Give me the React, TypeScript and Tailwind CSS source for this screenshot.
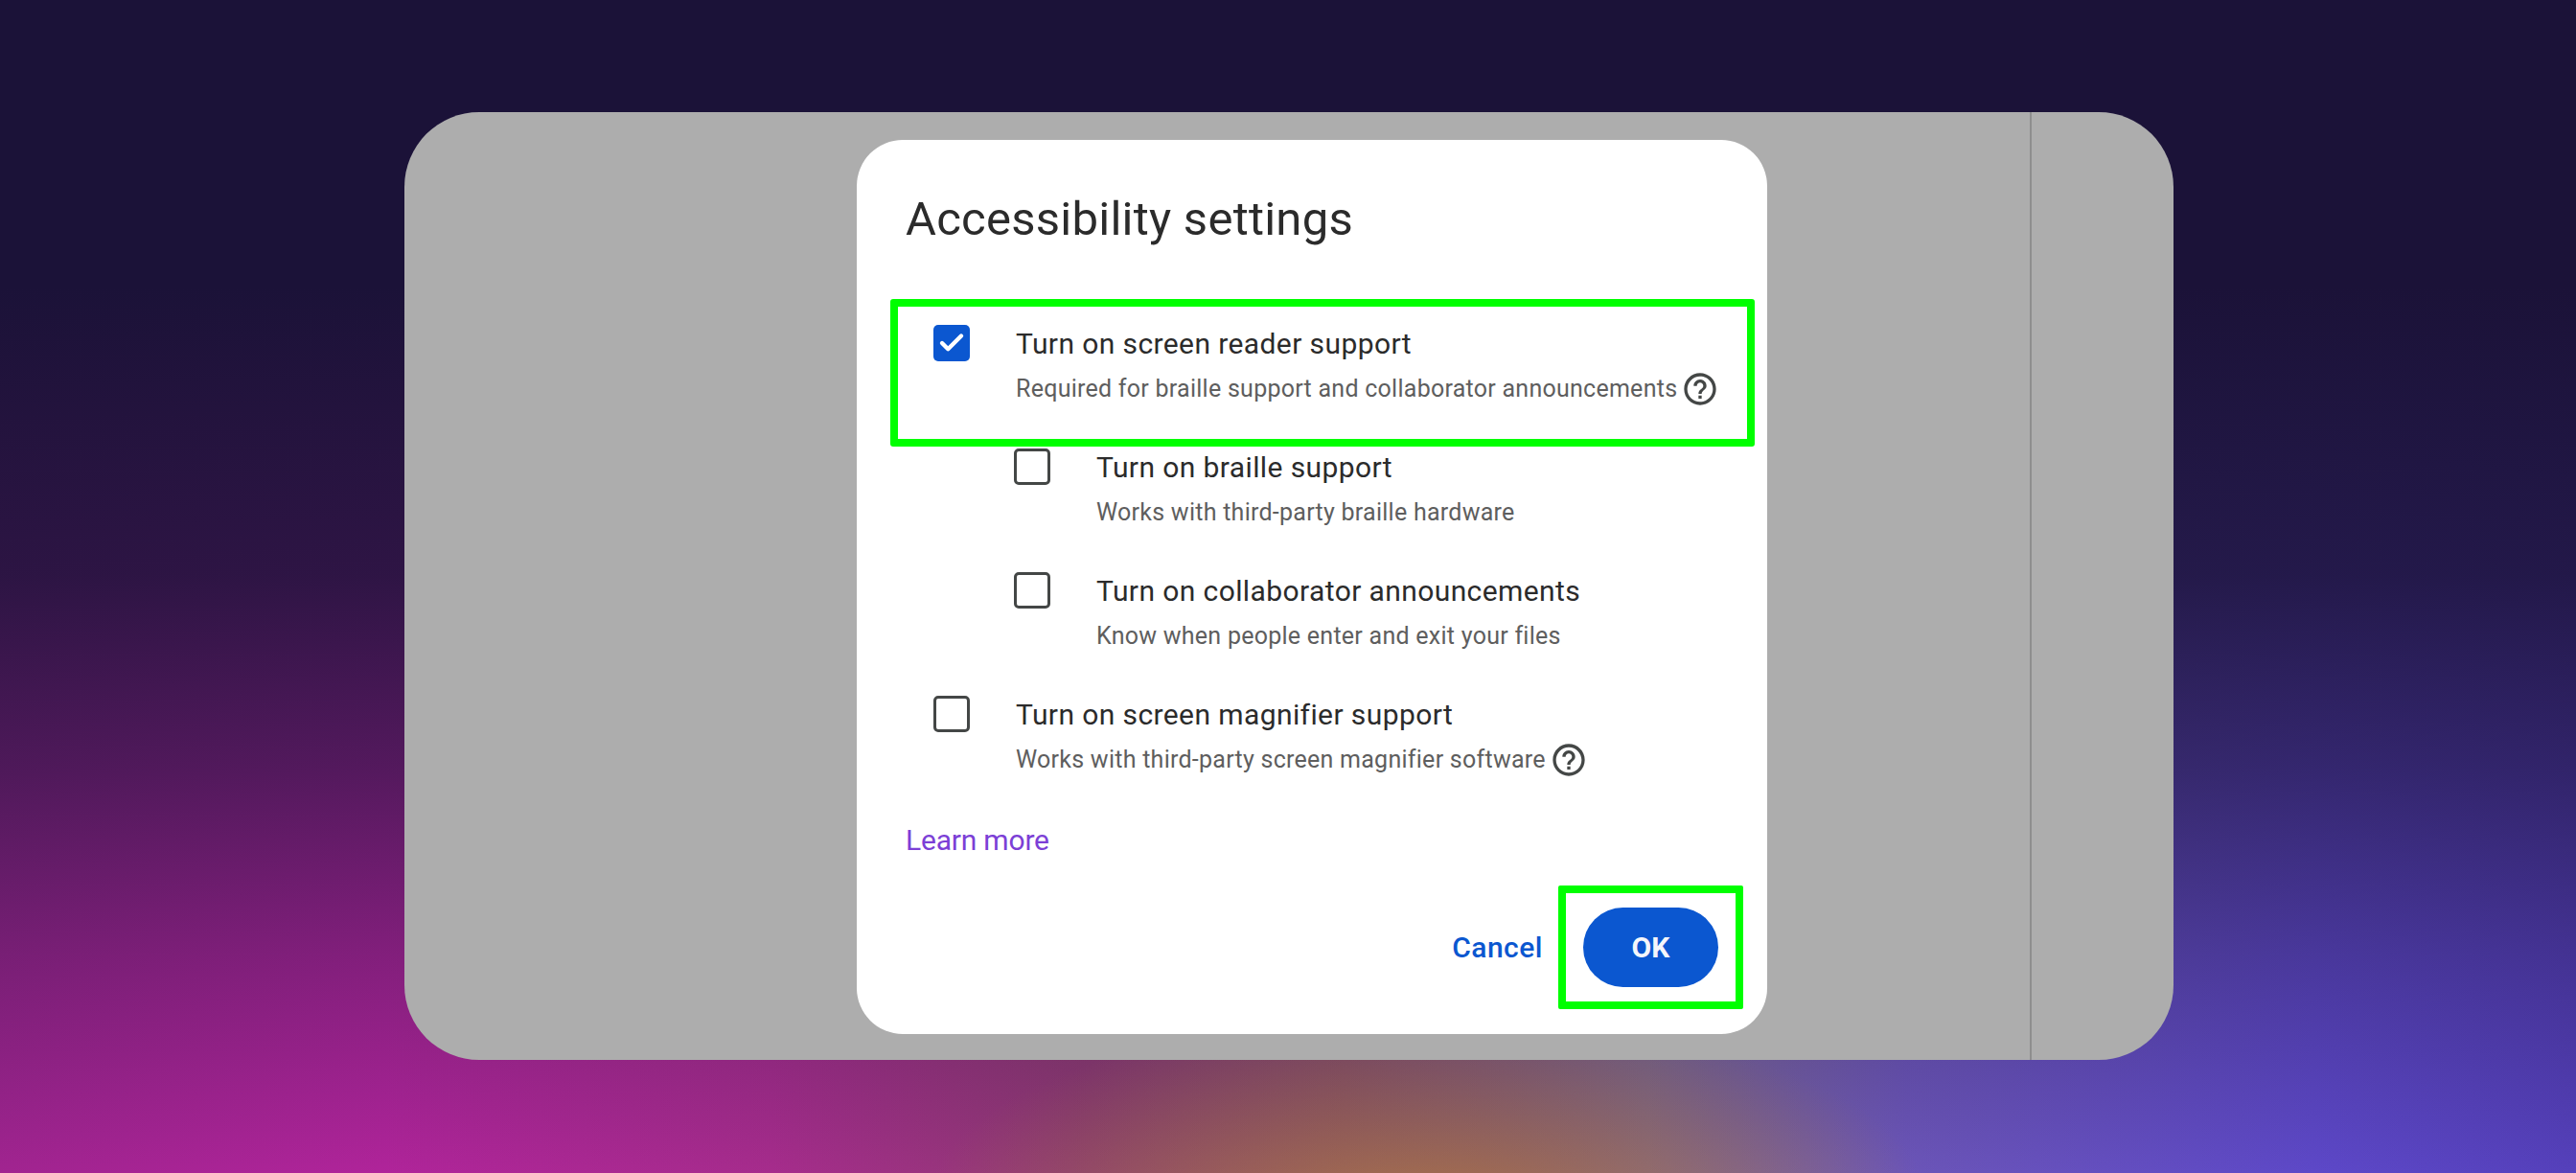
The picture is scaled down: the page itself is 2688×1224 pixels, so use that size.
import { Check } from 'lucide-react';

const font = "font-['Roboto',sans-serif]";

function HelpIcon() {
  return (
    <svg viewBox="0 0 24 24" className="ml-[4px] h-[40px] w-[40px] shrink-0 fill-[#444746]">
      <path d="M11 18h2v-2h-2v2zm1-16C6.48 2 2 6.48 2 12s4.48 10 10 10 10-4.48 10-10S17.52 2 12 2zm0 18c-4.41 0-8-3.59-8-8s3.59-8 8-8 8 3.59 8 8-3.59 8-8 8zm0-14c-2.21 0-4 1.79-4 4h2c0-1.1.9-2 2-2s2 .9 2 2c0 2-3 1.75-3 5h2c0-2.25 3-2.5 3-5 0-2.21-1.79-4-4-4z" />
    </svg>
  );
}

function Option({ label, hint, checked, help, indent }: { label: string; hint: string; checked?: boolean; help?: boolean; indent?: boolean }) {
  return (
    <div className={`flex items-start gap-[48px] ${indent ? 'pl-[113px]' : 'pl-[29px]'}`}>
      {checked ? (
        <div className="mt-[2px] flex h-[38px] w-[38px] shrink-0 items-center justify-center rounded-[5px] bg-[#0b57d0]">
          <Check size={30} strokeWidth={3.5} className="text-white" />
        </div>
      ) : (
        <div className="mt-[2px] h-[38px] w-[38px] shrink-0 rounded-[5px] border-[3.5px] border-[#444746]" />
      )}
      <div>
        <div className="mt-[2px] text-[30px] leading-[40px] tracking-[0.4px] text-[#2b2b2b]">{label}</div>
        <div className="mt-[4px] flex h-[46px] items-center text-[25px] tracking-[0.26px] text-[#5e5e5e]">
          {hint}
          {help && <HelpIcon />}
        </div>
      </div>
    </div>
  );
}

export default function App() {
  return (
    <div className={`h-[1224px] w-[2688px] overflow-hidden pl-[422px] pt-[117px] ${font} bg-[linear-gradient(to_bottom,#1b1238_0%,#1b1238_24.5%,#1b1238de_49%,#1b12389e_65.4%,#1b12384d_81.7%,#1b123800_100%),radial-gradient(ellipse_520px_190px_at_1490px_1250px,#a26c4c,transparent),linear-gradient(to_right,#a12490_0%,#b0249a_15%,#a62c8c_30%,#8e3a72_42%,#8a4f6c_52%,#7f6a90_64%,#6b55b8_74%,#5d48c8_90%,#5540bb_100%)]`}>
      {/* app window behind the scrim */}
      <div className="flex h-[989px] w-[1846px] rounded-[78px] bg-[#adadad]">
        <div className="w-[1696px] pl-[472px] pt-[29px]">
          <div className="relative h-[933px] w-[950px] rounded-[48px] bg-white pl-[51px] pt-[50px]">
            <h1 className="text-[49px] leading-[66px] tracking-[0.25px] text-[#2b2b2b]">Accessibility settings</h1>

            <div className="mt-[75px] flex flex-col gap-[37px]">
              <Option checked help label="Turn on screen reader support" hint="Required for braille support and collaborator announcements" />
              <Option indent label="Turn on braille support" hint="Works with third-party braille hardware" />
              <Option indent label="Turn on collaborator announcements" hint="Know when people enter and exit your files" />
              <Option help label="Turn on screen magnifier support" hint="Works with third-party screen magnifier software" />
            </div>

            <div className="mt-[41px] text-[30px] leading-[40px] tracking-[-0.2px] text-[#7c3fd6]">Learn more</div>

            <div className="mt-[50px] flex items-center justify-end gap-[42px] pr-[51px]">
              <span className="text-[30px] font-medium tracking-[0.5px] text-[#0b57d0]">Cancel</span>
              <button className="flex h-[83px] w-[141px] items-center justify-center rounded-full bg-[#0b57d0] text-[30px] font-bold text-[#f4f6fb]">OK</button>
            </div>

            {/* green highlights */}
            <div className="absolute left-[35px] top-[166px] h-[154px] w-[902px] rounded-[3px] border-[8px] border-[#00ff00]" />
            <div className="absolute left-[732px] top-[778px] h-[129px] w-[193px] rounded-[2px] border-[8px] border-[#00ff00]" />
          </div>
        </div>
        <div className="flex-1 border-l-2 border-[#8e8e8e]" />
      </div>
    </div>
  );
}
